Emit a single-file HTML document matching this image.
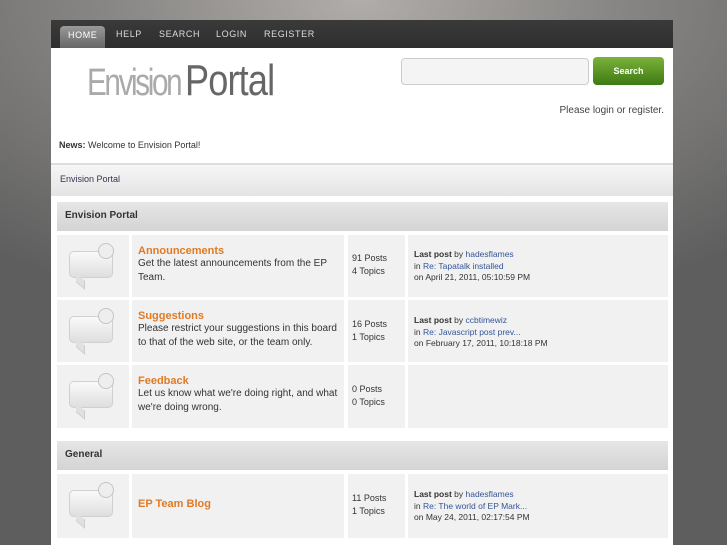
<!DOCTYPE html>
<html><head><meta charset="utf-8"><style>
*{margin:0;padding:0;box-sizing:border-box}
html,body{width:727px;height:545px;overflow:hidden;background:#5e5e5e}
body{font-family:"Liberation Sans",sans-serif;background:radial-gradient(ellipse 600px 320px at 360px 0,#b0adaa 0%,#8a8886 40%,#5e5e5e 100%);position:relative}
.wrap{position:absolute;left:51px;top:20px;width:622px;height:530px;background:#fff}
.nav{height:28px;background:linear-gradient(#3a3a3a,#2e2e2e);position:relative}
.nav span{position:absolute;top:0;height:28px;line-height:29px;font-size:9px;letter-spacing:.6px;color:#ddd}
.nav .on{background:linear-gradient(#999,#666);border-radius:4px 4px 0 0;top:6px;height:22px;line-height:18px;padding:0 8px;color:#fff;left:9px}
.logo{position:absolute;left:36px;top:36px;font-size:44px;color:#666;white-space:nowrap}
.logo .a{color:#aaa;font-size:38px;letter-spacing:-3px;display:inline-block;transform:scaleX(.78);transform-origin:left;font-weight:normal}
.logo .b{display:inline-block;transform:scaleX(.82);transform-origin:left;margin-left:-22px;letter-spacing:-1px}
.sbox{position:absolute;left:350px;top:38px;width:188px;height:27px;border:1px solid #ccc;border-radius:4px;background:#f4f4f4}
.sbtn{position:absolute;left:542px;top:37px;width:71px;height:28px;border-radius:4px;background:linear-gradient(#7cb23a,#3d7a14);color:#fff;font-size:9px;font-weight:bold;text-align:center;line-height:28px}
.plog{position:absolute;right:9px;top:85px;font-size:10px;color:#444}
.news{position:absolute;left:8px;top:120px;font-size:9px;color:#333}
.tree{position:absolute;left:0;top:143px;width:622px;height:33px;background:linear-gradient(#f6f6f6,#e4e4e4);border-top:2px solid #ddd;font-size:9px;color:#335;padding:9px 9px}
.cat{position:absolute;left:6px;width:611px;height:29px;background:linear-gradient(#e6e6e6,#d4d4d4);font-size:10px;font-weight:bold;color:#333;padding:8px 8px}
.c{position:absolute;background:#f1f1f1}
.t{color:#e07b25;font-weight:bold;font-size:11px}
.d{font-size:10px;color:#333;line-height:14px}
.s{font-size:9px;color:#333;line-height:13px}
.l{font-size:8.5px;color:#333;line-height:11.5px}
.l a{color:#335599}
.ic{position:absolute;left:12px;top:16px;width:44px;height:27px;background:linear-gradient(#fafafa,#dedede);border:1px solid #d0d0d0;border-radius:5px}
.ic:before{content:"";position:absolute;left:6px;top:25px;width:8px;height:8px;background:#e0e0e0;border-right:1px solid #ccc;border-bottom:1px solid #ccc;transform:skewY(40deg)}
.ic:after{content:"";position:absolute;left:28px;top:-9px;width:14px;height:14px;border-radius:50%;background:#eee;border:1px solid #c4c4c4}
</style></head><body>
<div class="wrap">
<div class="nav"><span class="on">HOME</span><span style="left:65px">HELP</span><span style="left:108px">SEARCH</span><span style="left:165px">LOGIN</span><span style="left:213px">REGISTER</span></div>
<div class="logo"><span class="a">Envision</span><span class="b">Portal</span></div>
<div class="sbox"></div><div class="sbtn">Search</div>
<div class="plog">Please login or register.</div>
<div class="news"><b>News:</b> Welcome to Envision Portal!</div>
<div class="tree">Envision Portal</div>
<div class="cat" style="top:182px">Envision Portal</div>

<div class="c" style="left:6px;top:215px;width:72px;height:62px"><div class="ic"></div></div>
<div class="c" style="left:81px;top:215px;width:212px;height:62px;padding:10px 6px"><div class="t">Announcements</div><div class="d">Get the latest announcements from the EP Team.</div></div>
<div class="c" style="left:297px;top:215px;width:57px;height:62px;padding:17px 4px"><div class="s">91 Posts<br>4 Topics</div></div>
<div class="c" style="left:357px;top:215px;width:260px;height:62px;padding:14px 6px"><div class="l"><b>Last post</b> by <a>hadesflames</a><br>in <a>Re: Tapatalk installed</a><br>on April 21, 2011, 05:10:59 PM</div></div>

<div class="c" style="left:6px;top:280px;width:72px;height:62px"><div class="ic"></div></div>
<div class="c" style="left:81px;top:280px;width:212px;height:62px;padding:10px 6px"><div class="t">Suggestions</div><div class="d">Please restrict your suggestions in this board to that of the web site, or the team only.</div></div>
<div class="c" style="left:297px;top:280px;width:57px;height:62px;padding:18px 4px"><div class="s">16 Posts<br>1 Topics</div></div>
<div class="c" style="left:357px;top:280px;width:260px;height:62px;padding:15px 6px"><div class="l"><b>Last post</b> by <a>ccbtimewiz</a><br>in <a>Re: Javascript post prev...</a><br>on February 17, 2011, 10:18:18 PM</div></div>

<div class="c" style="left:6px;top:345px;width:72px;height:63px"><div class="ic"></div></div>
<div class="c" style="left:81px;top:345px;width:212px;height:63px;padding:10px 6px"><div class="t">Feedback</div><div class="d">Let us know what we're doing right, and what we're doing wrong.</div></div>
<div class="c" style="left:297px;top:345px;width:57px;height:63px;padding:18px 4px"><div class="s">0 Posts<br>0 Topics</div></div>
<div class="c" style="left:357px;top:345px;width:260px;height:63px"></div>

<div class="cat" style="top:421px">General</div>
<div class="c" style="left:6px;top:454px;width:72px;height:64px"><div class="ic"></div></div>
<div class="c" style="left:81px;top:454px;width:212px;height:64px;padding:24px 6px"><div class="t">EP Team Blog</div></div>
<div class="c" style="left:297px;top:454px;width:57px;height:64px;padding:18px 4px"><div class="s">11 Posts<br>1 Topics</div></div>
<div class="c" style="left:357px;top:454px;width:260px;height:64px;padding:15px 6px"><div class="l"><b>Last post</b> by <a>hadesflames</a><br>in <a>Re: The world of EP Mark...</a><br>on May 24, 2011, 02:17:54 PM</div></div>
</div>
</body></html>
